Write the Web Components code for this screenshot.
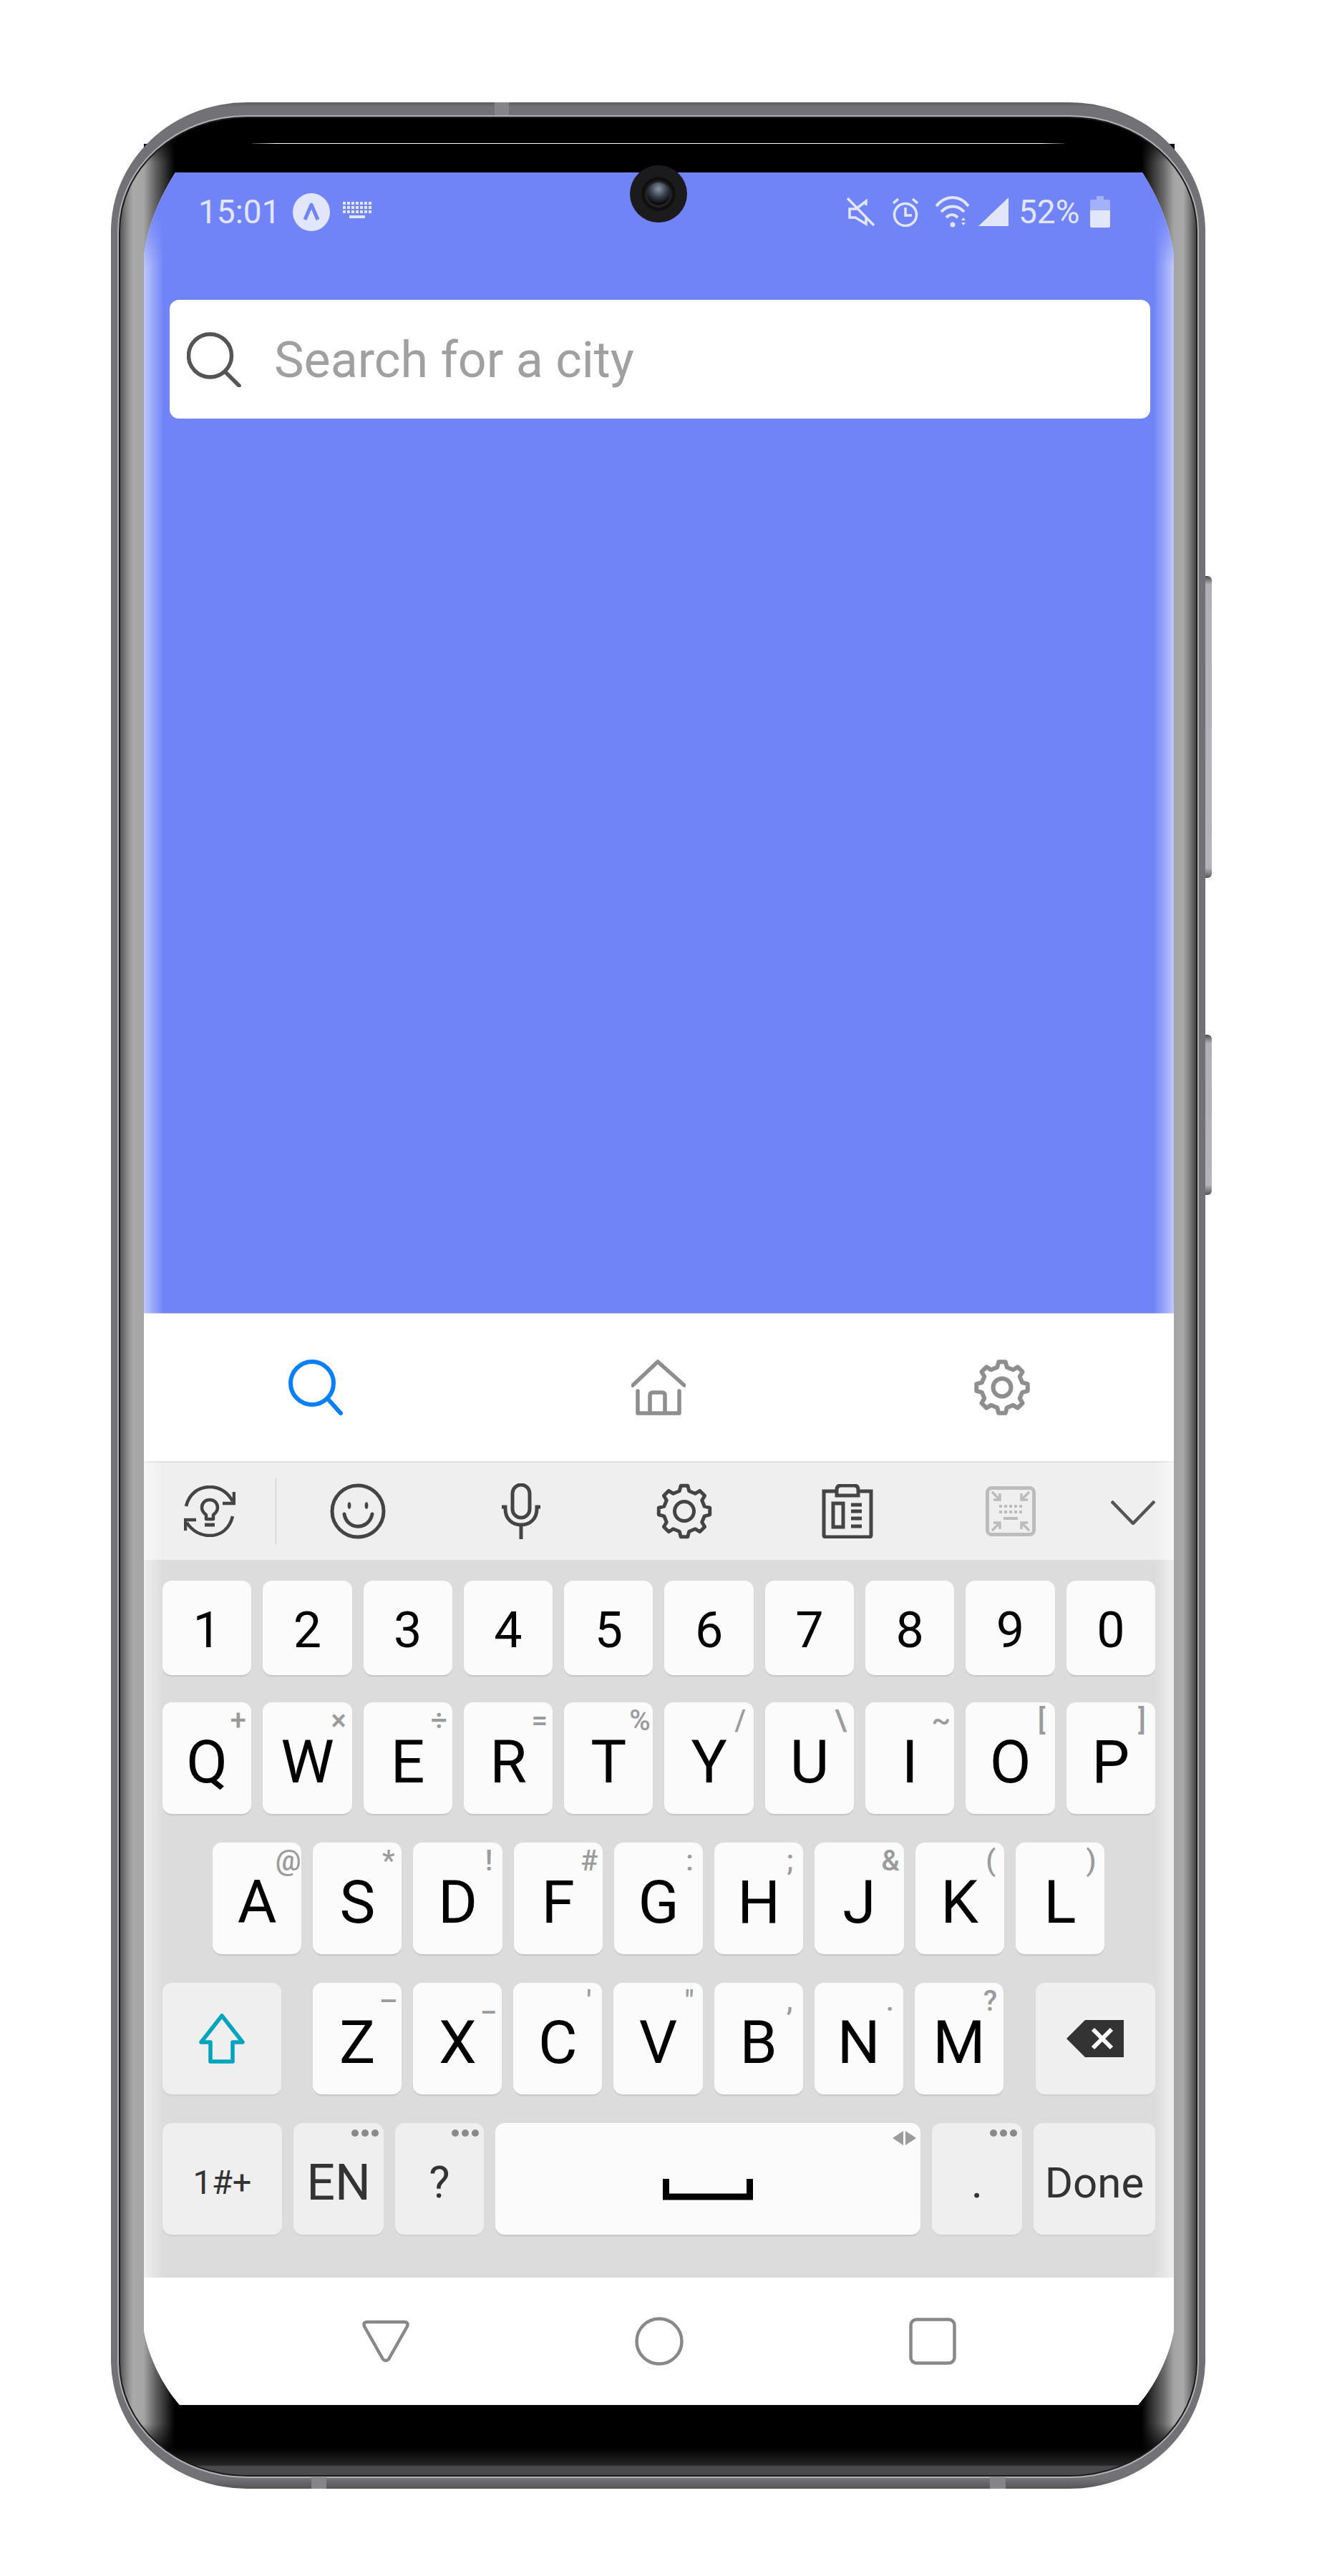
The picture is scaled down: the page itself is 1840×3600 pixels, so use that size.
<!DOCTYPE html>
<html>
<head>
<meta charset="utf-8">
<title>Search for a city</title>
<style>
  html, body { margin: 0; background: #fff; }
  body { padding: 143px 0 0 155px; width: 1685px; height: 3457px; overflow: hidden; font-family: Roboto, sans-serif; }
</style>
</head>
<body>
<phone-frame>
  <app-view>
    <status-bar></status-bar>
    <search-box>Search for a city</search-box>
  </app-view>
  <tab-bar></tab-bar>
  <key-toolbar></key-toolbar>
  <key-board></key-board>
  <nav-bar></nav-bar>
</phone-frame>

<script>
// outline of a cog, the same one is used in the tab bar and in the keyboard toolbar
function gearPath(c, rOut, rIn, teeth) {
  let d = ''
  const step = Math.PI * 2 / teeth
  for (let i = 0; i < teeth; i++) {
    const a = i * step - Math.PI / 2
    const pts = [[rIn, a - step * .3], [rOut, a - step * .17], [rOut, a + step * .17], [rIn, a + step * .3]]
    pts.forEach(([r, t], j) => {
      d += (i === 0 && j === 0 ? 'M' : 'L') + (c + r * Math.cos(t)).toFixed(1) + ' ' + (c + r * Math.sin(t)).toFixed(1)
    })
  }
  return d + 'Z'
}

// every element is a template put in an open shadow root
function makeElement(name, html, onConnect) {
  const template = document.createElement('template')
  template.innerHTML = html
  class El extends HTMLElement {
    constructor() {
      super()
      this.attachShadow({mode: 'open'})
      this.shadowRoot.appendChild(template.content.cloneNode(true))
    }
    connectedCallback() {
      if (onConnect) onConnect(this)
    }
  }
  customElements.define(name, El)
}

makeElement('phone-frame', `
<style>
  :host { display: block; position: relative; width: 1529px; height: 3335px; }
  .body { box-sizing: border-box; height: 100%; padding: 18px 9px 15px; border-radius: 190px / 180px; position: relative;
    background: linear-gradient(180deg, #5f5f63 0, #727176 .2%, #727176 99.6%, #545456 100%); }
  .steel { box-sizing: border-box; height: 100%; padding: 2px; border-radius: 181px / 162px; background: #b2b2b6; }
  .rim { box-sizing: border-box; height: 100%; padding: 2px; border-radius: 179px / 160px; background: #1c1c1c; }
  .bezel { box-sizing: border-box; height: 100%; border-radius: 177px / 158px; display: flex; flex-direction: column; padding-top: 35px;
    background:
      linear-gradient(0deg, #4a4a4c 0, #4a4a4c 12px, #262626 14px, transparent 38px),
      linear-gradient(180deg, #000 0, #000 14px, transparent 62px, transparent calc(100% - 72px), #000 calc(100% - 26px)),
      linear-gradient(90deg, #555 0, #8a8a8a 10px, #aaa 18px, #a4a4a4 33px, #666 48px, #000 76px, #000 calc(100% - 76px), #666 calc(100% - 46px), #a4a4a4 calc(100% - 31px), #aaa calc(100% - 18px), #777 calc(100% - 8px), #444 100%); }
  .speaker { height: 1px; margin: 0 184px; background: linear-gradient(90deg, #333, #fff 3%, #fff 97%, #333); flex: none; }
  .screen { position: relative; flex: none; height: 3120px; margin: 40px 31px 0 33px; display: flex; flex-direction: column; background: #fff;
    clip-path: path('M44 0C24 32 6 70 0 116L0 3016C6 3050 24 3090 50 3120L1389 3120C1415 3090 1433 3050 1439 3016L1439 116C1433 70 1415 32 1395 0Z'); }
  /* lit curved edges of the display */
  .edge { position: absolute; inset: 0 0 178px 0; pointer-events: none;
    background: linear-gradient(90deg, rgba(255,255,255,.55), rgba(255,255,255,0) 28px, rgba(255,255,255,0) calc(100% - 28px), rgba(255,255,255,.55));
    -webkit-mask-image: linear-gradient(180deg, transparent 50px, #000 130px); mask-image: linear-gradient(180deg, transparent 50px, #000 130px); }
  .cam { position: absolute; left: 725px; top: 88px; width: 80px; height: 80px; border-radius: 50%; background: #1b1b1d; display: flex; align-items: center; justify-content: center; }
  .cam i { display: flex; width: 48px; height: 48px; border-radius: 50%; align-items: center; justify-content: center; background: radial-gradient(circle, #3a3a3c 40%, #0c0c0c 62%, #2a2a2c 100%); }
  .cam b { display: block; width: 32px; height: 32px; border-radius: 50%; background: radial-gradient(circle at 50% 28%, #8a97a8 0, #39414d 40%, #0a0a0c 75%, #26262a 100%); }
  .btn { position: absolute; left: 1529px; width: 9px; border-radius: 0 6px 6px 0; background: linear-gradient(180deg, #4e4e50 0, #b0b0b6 12px, #b4b4ba calc(100% - 14px), #56565a 100%); }
  .notch { position: absolute; background: #858489; }
  .tip { position: absolute; background: #000; }
</style>
<div class="tip" style="left:46px;top:58px;width:6px;height:5px"></div>
<div class="tip" style="left:1478px;top:58px;width:8px;height:8px"></div>
<div class="btn" style="top:662px;height:422px"></div>
<div class="btn" style="top:1303px;height:224px"></div>
<div class="body">
  <div class="steel"><div class="rim"><div class="bezel">
    <div class="speaker"></div>
    <div class="screen"><slot></slot><div class="edge"></div></div>
  </div></div></div>
</div>
<div class="notch" style="left:536px;top:0;width:20px;height:18px"></div>
<div class="notch" style="left:280px;top:3319px;width:21px;height:16px"></div>
<div class="notch" style="left:1228px;top:3319px;width:22px;height:16px"></div>
<div class="cam"><i><b></b></i></div>
`)

makeElement('app-view', `
<style>
  :host { display: flex; flex-direction: column; flex: none; height: 1594px; background: #7084f8; }
</style>
<slot></slot>
`)

makeElement('status-bar', `
<style>
  :host { display: flex; align-items: center; flex: none; height: 110px; padding: 0 89px 0 76px; color: #e2e6fd; font: 400 46px/1 Roboto, sans-serif; }
  svg { display: block; flex: none; }
  .spacer { flex: 1; }
</style>
<span>15:01</span>
<svg style="margin-left:17px" width="52" height="53" viewBox="0 0 52 53"><ellipse cx="26" cy="26.5" rx="26" ry="26.5" fill="#e2e6fd"/><path d="M17 37L26 16L35 37" fill="none" stroke="#7084f8" stroke-width="5" stroke-linejoin="round"/></svg>
<svg style="margin-left:17px;margin-top:-4px" width="42" height="24" viewBox="0 0 42 24" fill="none" stroke="#e2e6fd"><path d="M1 2H41M1 8H41M1 14H41" stroke-width="4" stroke-dasharray="4 2"/><path d="M10 21H32" stroke-width="4"/></svg>
<div class="spacer"></div>
<svg width="40" height="42" viewBox="0 0 40 42" fill="none" stroke="#e2e6fd" stroke-width="3.500"><path d="M1 2L38 40M27 12V6L13 17H4V29H12L27 38V29"/></svg>
<svg style="margin-left:23px" width="38" height="42" viewBox="0 0 38 42" fill="none" stroke="#e2e6fd" stroke-width="3.500"><circle cx="19" cy="25" r="15.5"/><path d="M19 15V26H28M2 9L9 3M36 9L29 3"/></svg>
<svg style="margin-left:23px" width="47" height="44" viewBox="0 0 47 44" fill="none" stroke="#e2e6fd" stroke-width="4"><path d="M1 14C14 -2 34 -2 46 14M8 22C17 12 31 12 40 22M15 30C20 25 26 25 31 30"/><circle cx="24" cy="40" r="3.5" fill="#e2e6fd" stroke="none"/><path d="M36 34L39 30L42 34ZM36 37L39 41L42 37Z" fill="#e2e6fd" stroke="none"/></svg>
<svg style="margin-left:13px" width="42" height="40" viewBox="0 0 42 40"><path d="M0 40L42 0V40Z" fill="#e2e6fd"/></svg>
<span style="margin-left:14px;width:85px">52%</span>
<svg style="margin-left:15px" width="28" height="44" viewBox="0 0 28 44"><path d="M9 0H19V5H26Q28 5 28 7V20H0V7Q0 5 2 5H9Z" fill="#e2e6fd" opacity=".45"/><path d="M0 20H28V42Q28 44 26 44H2Q0 44 0 42Z" fill="#e2e6fd"/></svg>
`)

makeElement('search-box', `
<style>
  :host { display: flex; align-items: center; flex: none; box-sizing: border-box; height: 166px; margin: 68px 33px 0 36px; padding: 2px 0 0 24px; background: #fff; border-radius: 13px; color: #a0a0a0; font: 400 70px/1 Roboto, sans-serif; }
  svg { flex: none; display: block; margin-right: 46px; margin-top: -2px; }
</style>
<svg width="76" height="77" viewBox="0 0 76 77" fill="none" stroke="#555" stroke-width="5.500" stroke-linecap="round"><circle cx="32.5" cy="33" r="30"/><path d="M54 56L73 75"/></svg>
<slot></slot>
`)

makeElement('tab-bar', `
<style>
  :host { display: grid; grid-template-columns: repeat(3, 1fr); align-items: center; justify-items: center; flex: none; height: 207px; background: #fff; border-top: 1px solid #d0d2e4; box-sizing: border-box; }
  svg { display: block; }
</style>
<svg width="76" height="78" viewBox="0 0 76 78" fill="none" stroke="#0a7ffb" stroke-width="6" stroke-linecap="round"><circle cx="33" cy="33" r="30"/><path d="M55 55L73 75"/></svg>
<svg width="76" height="78" viewBox="0 0 76 78" fill="none" stroke="#8e8e8e" stroke-width="5.500" stroke-linecap="round" stroke-linejoin="round"><path d="M2 36L37 3L74 36M9 44V75H67V44M26 75V50Q26 46 30 46H43Q47 46 47 50V75"/></svg>
<svg width="80" height="80" viewBox="0 0 80 80" fill="none" stroke="#8e8e8e" stroke-width="6" stroke-linejoin="round"><path d="${gearPath(40, 36, 29, 8)}"/><circle cx="40" cy="40" r="12.5"/></svg>
`)

makeElement('key-toolbar', `
<style>
  :host { display: grid; grid-template-columns: 185px repeat(5, 228px) 1fr; align-items: center; justify-items: center; flex: none; height: 138px; background: #efefef; border-top: 2px solid #dcdcdc; box-sizing: border-box; }
  svg { display: block; }
  .first { position: relative; justify-self: stretch; display: flex; justify-content: center; align-items: center; height: 92px; border-right: 1px solid #c8c8c8; }
</style>
<div class="first">
  <svg width="72" height="72" viewBox="0 0 72 72" fill="none" stroke="#444" stroke-width="4.500"><path d="M3 29C7 12 20 2 36 2C48 2 60 8 68 22M54 25H70V9M68 43C64 60 52 70 36 70C24 70 12 64 4 52M17 48H2V63"/><path d="M31 47V41C27 38 25 35 25 31C25 24 30 20 36 20C42 20 47 24 47 31C47 35 45 38 41 41V47Z" stroke-linejoin="round"/><path d="M29 55H43" stroke-width="5"/></svg>
</div>
<svg width="78" height="78" viewBox="0 0 78 78" fill="none" stroke="#444" stroke-width="5" stroke-linecap="round"><circle cx="39" cy="39" r="36"/><path d="M20 43C24 66 54 66 59 43"/><ellipse cx="27" cy="31" rx="1.6" ry="4" fill="#444" stroke-width="1.5"/><ellipse cx="51" cy="31" rx="1.6" ry="4" fill="#444" stroke-width="1.5"/></svg>
<svg width="54" height="78" viewBox="0 0 54 78" fill="none" stroke="#444" stroke-width="5"><rect x="15" y="2" width="24" height="46" rx="12"/><path d="M0 33H5V36C5 50 15 58 27 58C39 58 49 50 49 36V33H54M27 58V78"/></svg>
<svg width="78" height="78" viewBox="0 0 78 78" fill="none" stroke="#444" stroke-width="5" stroke-linejoin="round"><path d="${gearPath(39, 36, 29, 8)}"/><circle cx="39" cy="39" r="13.5"/></svg>
<svg width="72" height="76" viewBox="0 0 72 76" fill="none" stroke="#444" stroke-width="5"><path d="M21 10H3V71Q3 74 6 74H66Q69 74 69 71V10H51"/><path d="M21 16V8Q21 2 27 2H45Q51 2 51 8V16Z"/><rect x="16" y="27" width="14" height="33"/><path d="M41 29H56M41 38H56M41 48H56M41 59H56"/></svg>
<svg width="70" height="70" viewBox="0 0 70 70" fill="none" stroke="#bcbcbc" stroke-width="3.500"><rect x="2.500" y="2.500" width="65" height="65" rx="6" stroke-width="5"/><path d="M9 8L20 19M20 10V19H11M61 8L50 19M50 10V19H59M9 62L20 51M20 60V51H11M61 62L50 51M50 60V51H59"/><path d="M19 28H52M19 36H52" stroke-width="4" stroke-dasharray="4 3"/><path d="M25 45H45" stroke-width="4"/></svg>
<svg style="margin-top:3px" width="62" height="34" viewBox="0 0 62 34" fill="none" stroke="#555" stroke-width="4.500"><path d="M1 1L31 32L61 1"/></svg>
`)

makeElement('key-row', `
<style>
  :host { display: flex; gap: 16px; height: var(--h, 156px); flex: none; }
</style>
<slot></slot>
`)

makeElement('kb-key', `
<style>
  :host { position: relative; display: flex; align-items: center; justify-content: center; box-sizing: border-box; flex: var(--grow, 1) 1 var(--w, 0); min-width: 0; height: 100%; padding-top: var(--pt, 12px); font: 400 var(--fs, 84px)/1 Roboto, sans-serif; color: #000; background: #fbfbfb; border-radius: 13px; box-shadow: 0 3px 2px -1px #c4c4c4; }
  :host([fn]) { background: #efefef; color: #333; box-shadow: 0 3px 2px -1px #cfcfcf; }
  .hint { position: absolute; top: 6px; right: 0; width: 37px; text-align: center; font-size: 40px; font-weight: 500; line-height: 40px; color: #9b9b9b; }
  .dots { position: absolute; top: 9px; right: 7px; display: none; gap: 4px; }
  .dots i { display: block; width: 10px; height: 10px; border-radius: 50%; background: #8a8a8a; }
  :host([dots]) .dots { display: flex; }
</style>
<span class="hint"></span>
<span class="dots"><i></i><i></i><i></i></span>
<slot></slot>
`, el => {
  el.shadowRoot.querySelector('.hint').textContent = el.getAttribute('hint') || ''
})

makeElement('key-board', `
<style>
  :host { display: flex; flex-direction: column; box-sizing: border-box; flex: none; height: 1003px; padding: 29px 26px 0; background: #dcdcdc; }
  .fixed { --grow: 0; }
  svg { display: block; }
</style>
<key-row style="--h:132px;--fs:70px;--pt:6px;margin-bottom:38px">
  <kb-key>1</kb-key><kb-key>2</kb-key><kb-key>3</kb-key><kb-key>4</kb-key><kb-key>5</kb-key><kb-key>6</kb-key><kb-key>7</kb-key><kb-key>8</kb-key><kb-key>9</kb-key><kb-key>0</kb-key>
</key-row>
<key-row style="margin-bottom:40px">
  <kb-key hint="+">Q</kb-key><kb-key hint="×">W</kb-key><kb-key hint="÷">E</kb-key><kb-key hint="=">R</kb-key><kb-key hint="%">T</kb-key><kb-key hint="/">Y</kb-key><kb-key hint="\\">U</kb-key><kb-key hint="~">I</kb-key><kb-key hint="[">O</kb-key><kb-key hint="]">P</kb-key>
</key-row>
<key-row style="margin-bottom:40px;padding:0 71px 0 70px">
  <kb-key hint="@">A</kb-key><kb-key hint="*">S</kb-key><kb-key hint="!">D</kb-key><kb-key hint="#">F</kb-key><kb-key hint=":">G</kb-key><kb-key hint=";">H</kb-key><kb-key hint="&amp;">J</kb-key><kb-key hint="(">K</kb-key><kb-key hint=")">L</kb-key>
</key-row>
<key-row style="margin-bottom:40px">
  <kb-key fn class="fixed" style="--w:166px;margin-right:28px;--pt:0px">
    <svg width="64" height="70" viewBox="0 0 64 70" fill="none" stroke="#00a5bd" stroke-width="5.500" stroke-linejoin="round"><path d="M32 3L61 40H47V67H16V40H3Z"/></svg>
  </kb-key>
  <kb-key hint="–">Z</kb-key><kb-key hint="_">X</kb-key><kb-key hint="'">C</kb-key><kb-key hint="&quot;">V</kb-key><kb-key hint=",">B</kb-key><kb-key hint=".">N</kb-key><kb-key hint="?">M</kb-key>
  <kb-key fn class="fixed" style="--w:167px;margin-left:29px;--pt:0px">
    <svg width="80" height="52" viewBox="0 0 80 52"><path d="M0 26L26 0H80V52H26Z" fill="#333"/><path d="M37 13L63 39M63 13L37 39" stroke="#fff" stroke-width="6"/></svg>
  </kb-key>
</key-row>
<key-row>
  <kb-key fn class="fixed" style="--w:167px;--fs:47px;--pt:8px">1#+</kb-key>
  <kb-key fn dots class="fixed" style="--w:126px;--fs:70px;--pt:10px">EN</kb-key>
  <kb-key fn dots class="fixed" style="--w:124px;--fs:62px;--pt:10px">?</kb-key>
  <kb-key class="fixed" style="--w:594px;--pt:0px">
    <svg width="126" height="30" viewBox="0 0 126 30" fill="none" stroke="#000" stroke-width="9" style="margin-top:30px"><path d="M4.5 0V25H121.500V0"/></svg>
    <svg style="position:absolute;right:6px;top:11px" width="33" height="20" viewBox="0 0 33 20" fill="#9b9b9b"><path d="M15 0V20L0 10ZM18 0V20L33 10Z"/></svg>
  </kb-key>
  <kb-key fn dots class="fixed" style="--w:126px;--fs:62px;--pt:10px">.</kb-key>
  <kb-key fn class="fixed" style="--w:170px;--fs:60px;--pt:12px">Done</kb-key>
</key-row>
`)

makeElement('nav-bar', `
<style>
  :host { display: grid; grid-template-columns: repeat(3, 382px); justify-content: center; align-items: center; justify-items: center; flex: none; height: 178px; box-sizing: border-box; background: #fff; }
  svg { display: block; }
</style>
<svg width="68" height="60" viewBox="0 0 68 60" fill="none" stroke="#888" stroke-width="4.500" stroke-linejoin="round"><path d="M8 3H60Q66 3 64 9L38 55Q34 59 30 55L4 9Q2 3 8 3Z"/></svg>
<svg width="68" height="68" viewBox="0 0 68 68" fill="none" stroke="#888" stroke-width="4.500"><circle cx="34" cy="34" r="31.500"/></svg>
<svg width="66" height="66" viewBox="0 0 66 66" fill="none" stroke="#888" stroke-width="4.500"><rect x="2.500" y="2.500" width="61" height="61" rx="8"/></svg>
`)
</script>
</body>
</html>
